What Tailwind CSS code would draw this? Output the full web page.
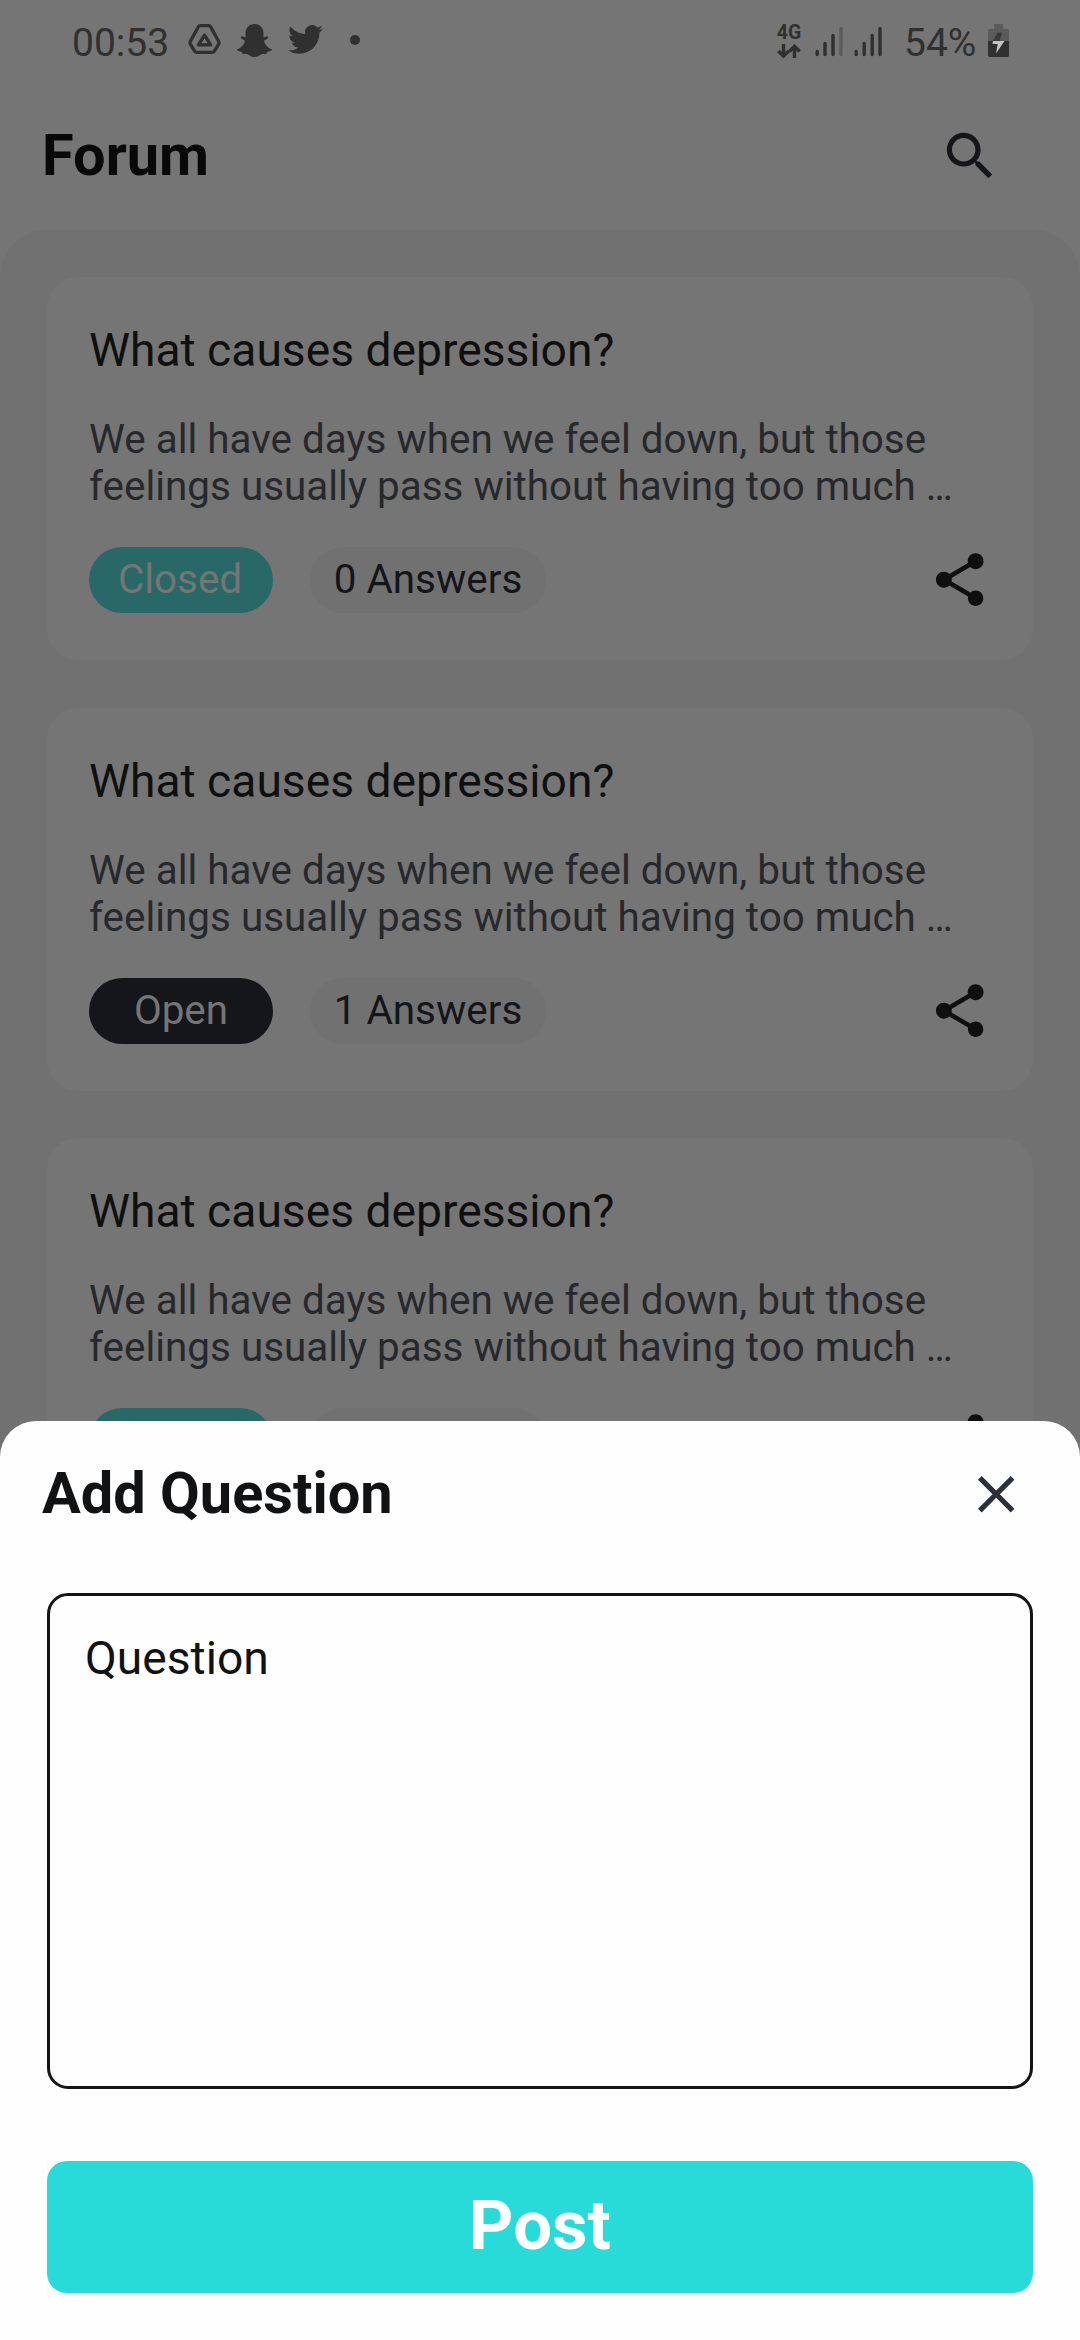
<!DOCTYPE html>
<html lang="en">
<head>
<meta charset="utf-8">
<title>Forum</title>
<script src="https://cdn.jsdelivr.net/npm/@tailwindcss/browser@4"></script>
</head>
<body>
<div class="relative w-[1080px] h-[2340px] overflow-hidden bg-[#757575] font-[Roboto,sans-serif]">

  <!-- status bar -->
  <div class="flex h-[84px] items-start pl-[72px] pr-[71px] text-[#303030]">
    <span class="mt-5 w-[115px] text-[39px] leading-[46px]">00:53</span>
    <svg class="mt-[23px] ml-px h-8 w-[33px] shrink-0" viewBox="0 0 33 32" fill="none" stroke="currentColor" stroke-width="3.300" stroke-linejoin="round">
      <path d="M12.300 2.700h8.400q1.300 0 2 1.200l8 14.600q.7 1.400-.1 2.600l-4.200 7q-.8 1.200-2.200 1.200H8.800q-1.400 0-2.200-1.200l-4.200-7q-.8-1.200-.1-2.600l8-14.600q.7-1.200 2-1.200z"/>
      <path d="M16.500 12.200l-6.100 9.700h12.200z"/>
    </svg>
    <svg class="mt-6 ml-[15.500px] h-[33px] w-[35px] shrink-0" viewBox="0 0 35 33" fill="currentColor">
      <path d="M17.500 0C23 0 26.400 4 26.500 9l-.1 4.300c1.200 0 2.300-.5 3.300-1 1.200-.3 2 .9 1.100 1.900-1 1.100-2.600 1.500-3.400 2.300-.9 2.500 3.400 7.400 7.200 8.800.6.400.5 1-.1 1.300-1.400.9-3.300 1.100-4.500 1.600-.4.600-.2 1.300-.8 1.700-1.400.4-3.100-.2-4.700.4-1.900.8-3.700 2.700-7 2.700s-5.100-1.900-7-2.700c-1.600-.6-3.300 0-4.700-.4-.6-.4-.4-1.100-.8-1.700-1.200-.5-3.100-.7-4.500-1.600-.6-.3-.7-.9-.1-1.300 3.800-1.400 8.100-6.300 7.200-8.800-.8-.8-2.400-1.200-3.400-2.300-.9-1-.1-2.200 1.100-1.900 1 .5 2.100 1 3.300 1L8.500 9C8.600 4 12 0 17.500 0z"/>
    </svg>
    <svg class="mt-[22px] ml-4 h-[35px] w-[35px] shrink-0" viewBox="0 0 24 24" fill="currentColor">
      <path d="M23.953 4.570a10 10 0 01-2.825.775 4.958 4.958 0 002.163-2.723c-.951.555-2.005.959-3.127 1.184a4.920 4.920 0 00-8.384 4.482C7.690 8.095 4.067 6.130 1.640 3.162a4.822 4.822 0 00-.666 2.475c0 1.710.87 3.213 2.188 4.096a4.904 4.904 0 01-2.228-.616v.06a4.923 4.923 0 003.946 4.827 4.996 4.996 0 01-2.212.085 4.936 4.936 0 004.604 3.417 9.867 9.867 0 01-6.102 2.105c-.39 0-.779-.023-1.170-.067a13.995 13.995 0 007.557 2.209c9.053 0 13.998-7.496 13.998-13.985 0-.21 0-.42-.015-.63A9.935 9.935 0 0024 4.590z"/>
    </svg>
    <span class="mt-[35px] ml-[27px] size-2.5 rounded-full bg-[#303030]"></span>

    <div class="ml-auto flex">
      <div class="mt-6 flex w-6 flex-col items-center">
        <span class="text-[19.500px] leading-[18px] font-bold">4G</span>
        <svg class="mt-[2px] h-[15px] w-6" viewBox="0 0 24 15" fill="none" stroke="currentColor" stroke-width="3.400">
          <path d="M6.500 0v12M1.300 7l5.200 5.200L11.700 7M17.500 14V2.500M12.300 7.500l5.200-5.200 5.200 5.200"/>
        </svg>
      </div>
      <svg class="mt-[26px] ml-3.5 h-[31px] w-[68px]" viewBox="0 0 68 31" stroke="currentColor" stroke-width="3.400" stroke-linecap="round">
        <path d="M2.200 25.500V28.500M10 17.500V28.500M18 9.500V28.500M41.200 25.500V28.500M49.200 17.500V28.500M57.200 9.500V28.500M65 2.500V28.500"/>
        <path d="M26 2.500V28.500" stroke="#5b5b5b"/>
      </svg>
      <span class="mt-5 ml-[21px] w-[84px] text-[39px] leading-[46px]">54%</span>
      <svg class="mt-6 h-[33px] w-[21px]" viewBox="0 0 21 33">
        <path d="M6 0h9v5h4.500Q21 5 21 6.500V17H0V6.500Q0 5 1.500 5H6z" fill="#5b5b5b"/>
        <path d="M0 17H21V31q0 2-2 2H2q-2 0-2-2z" fill="#303030"/>
        <path d="M9.500 8.500H14L11.800 17H5z" fill="#3a3a3a"/>
        <path d="M5 17H16.500L8 29.500 9.700 20H4.500z" fill="#c4c4c4"/>
      </svg>
    </div>
  </div>

  <!-- app bar -->
  <header class="flex h-[146px] items-start justify-between pl-[42px] pr-[79px]">
    <h1 class="pt-[37px] text-[57.700px] leading-[68px] font-bold text-[#080808]">Forum</h1>
    <svg class="mt-[41px] size-[62.400px]" viewBox="0 0 24 24" fill="#15161a">
      <path d="M15.500 14h-.79l-.28-.27A6.471 6.471 0 0 0 16 9.500 6.500 6.500 0 1 0 9.500 16c1.610 0 3.090-.59 4.230-1.570l.27.28v.79l5 4.990L20.490 19l-4.990-5zm-6 0C7.010 14 5 11.990 5 9.500S7.010 5 9.500 5 14 7.010 14 9.500 11.990 14 9.500 14z"/>
    </svg>
  </header>

  <!-- question list -->
  <main class="flex h-[2110px] flex-col gap-[47.600px] rounded-t-[47px] bg-[#717171] px-[47px] pt-[47px]">
    <article class="h-[383px] shrink-0 rounded-[31px] bg-[#757575] px-[42px] pt-[46px]">
      <h2 class="text-[46.200px] leading-[54px] text-[#0f0f0f]">What causes depression?</h2>
      <p class="mt-[39px] text-[40.400px] leading-[47.300px] whitespace-nowrap text-[#27282b]">We all have days when we feel down, but those<br>feelings usually pass without having too much …</p>
      <div class="mt-[36.400px] flex h-[66px] items-center">
        <span class="flex h-full w-[184px] items-center justify-center rounded-full bg-[#286867] pr-0.5 text-[40.400px] leading-[48px] text-[#757575]">Closed</span>
        <span class="ml-[37px] flex h-full w-[236px] items-center justify-center rounded-full bg-[#717171] text-[40.400px] leading-[48px] text-[#141519]">0 Answers</span>
        <svg class="ml-auto size-[63.500px]" viewBox="0 0 24 24" fill="#0f0f0f">
          <path d="M18 16.080c-.76 0-1.440.3-1.960.77L8.910 12.700c.05-.23.09-.46.09-.7s-.04-.47-.09-.7l7.050-4.110c.54.5 1.250.81 2.040.81 1.660 0 3-1.340 3-3s-1.340-3-3-3-3 1.340-3 3c0 .24.040.47.090.7L8.040 9.810C7.500 9.310 6.790 9 6 9c-1.660 0-3 1.340-3 3s1.340 3 3 3c.79 0 1.500-.31 2.040-.81l7.120 4.160c-.05.21-.08.43-.08.65 0 1.610 1.310 2.920 2.920 2.920s2.920-1.310 2.920-2.920-1.310-2.920-2.920-2.920z"/>
        </svg>
      </div>
    </article>

    <article class="h-[383px] shrink-0 rounded-[31px] bg-[#757575] px-[42px] pt-[46px]">
      <h2 class="text-[46.200px] leading-[54px] text-[#0f0f0f]">What causes depression?</h2>
      <p class="mt-[39px] text-[40.400px] leading-[47.300px] whitespace-nowrap text-[#27282b]">We all have days when we feel down, but those<br>feelings usually pass without having too much …</p>
      <div class="mt-[36.400px] flex h-[66px] items-center">
        <span class="flex h-full w-[184px] items-center justify-center rounded-full bg-[#15161a] text-[40.400px] leading-[48px] text-[#757575]">Open</span>
        <span class="ml-[37px] flex h-full w-[236px] items-center justify-center rounded-full bg-[#717171] text-[40.400px] leading-[48px] text-[#141519]">1 Answers</span>
        <svg class="ml-auto size-[63.500px]" viewBox="0 0 24 24" fill="#0f0f0f">
          <path d="M18 16.080c-.76 0-1.440.3-1.960.77L8.910 12.700c.05-.23.09-.46.09-.7s-.04-.47-.09-.7l7.050-4.110c.54.5 1.250.81 2.040.81 1.660 0 3-1.340 3-3s-1.340-3-3-3-3 1.340-3 3c0 .24.040.47.090.7L8.040 9.810C7.500 9.310 6.790 9 6 9c-1.660 0-3 1.340-3 3s1.340 3 3 3c.79 0 1.500-.31 2.040-.81l7.120 4.160c-.05.21-.08.43-.08.65 0 1.610 1.310 2.920 2.920 2.920s2.920-1.310 2.920-2.920-1.310-2.920-2.920-2.920z"/>
        </svg>
      </div>
    </article>

    <article class="h-[383px] shrink-0 rounded-[31px] bg-[#757575] px-[42px] pt-[46px]">
      <h2 class="text-[46.200px] leading-[54px] text-[#0f0f0f]">What causes depression?</h2>
      <p class="mt-[39px] text-[40.400px] leading-[47.300px] whitespace-nowrap text-[#27282b]">We all have days when we feel down, but those<br>feelings usually pass without having too much …</p>
      <div class="mt-[36.400px] flex h-[66px] items-center">
        <span class="h-full w-[184px] rounded-full bg-[#286867]"></span>
        <span class="ml-[37px] h-full w-[236px] rounded-full bg-[#717171]"></span>
        <svg class="ml-auto size-[63.500px]" viewBox="0 0 24 24" fill="#0f0f0f">
          <path d="M18 16.080c-.76 0-1.440.3-1.960.77L8.910 12.700c.05-.23.09-.46.09-.7s-.04-.47-.09-.7l7.050-4.110c.54.5 1.250.81 2.040.81 1.660 0 3-1.340 3-3s-1.340-3-3-3-3 1.340-3 3c0 .24.040.47.090.7L8.040 9.810C7.500 9.310 6.790 9 6 9c-1.660 0-3 1.340-3 3s1.340 3 3 3c.79 0 1.500-.31 2.040-.81l7.120 4.160c-.05.21-.08.43-.08.65 0 1.610 1.310 2.920 2.920 2.920s2.920-1.310 2.920-2.920-1.310-2.920-2.920-2.920z"/>
        </svg>
      </div>
    </article>
  </main>

  <!-- bottom sheet -->
  <section class="absolute inset-x-0 bottom-0 flex h-[919px] flex-col rounded-t-[36px] bg-[#fefefe] px-[47px]">
    <div class="-ml-[5px] flex h-[172px] items-start justify-between pr-[6px]">
      <h2 class="pt-[38px] text-[57.700px] leading-[68px] font-bold text-[#111214]">Add Question</h2>
      <svg class="mt-[42px] size-[62.400px]" viewBox="0 0 24 24" fill="#2b2f38">
        <path d="M19 6.410L17.590 5 12 10.590 6.410 5 5 6.410 10.590 12 5 17.590 6.410 19 12 13.410 17.590 19 19 17.590 13.410 12z"/>
      </svg>
    </div>
    <div class="h-[496px] rounded-[21px] border-3 border-[#141414] px-[35px] pt-[35px] text-[46.200px] leading-[54px] text-[#111214]">Question</div>
    <div class="mt-[72px] bg-[#fafafa]">
      <div class="flex h-[132px] items-center justify-center rounded-[20px] bg-[#29dbd8] pb-[3px] text-[69px] leading-[80px] font-bold text-white">Post</div>
    </div>
  </section>
</div>
</body>
</html>
